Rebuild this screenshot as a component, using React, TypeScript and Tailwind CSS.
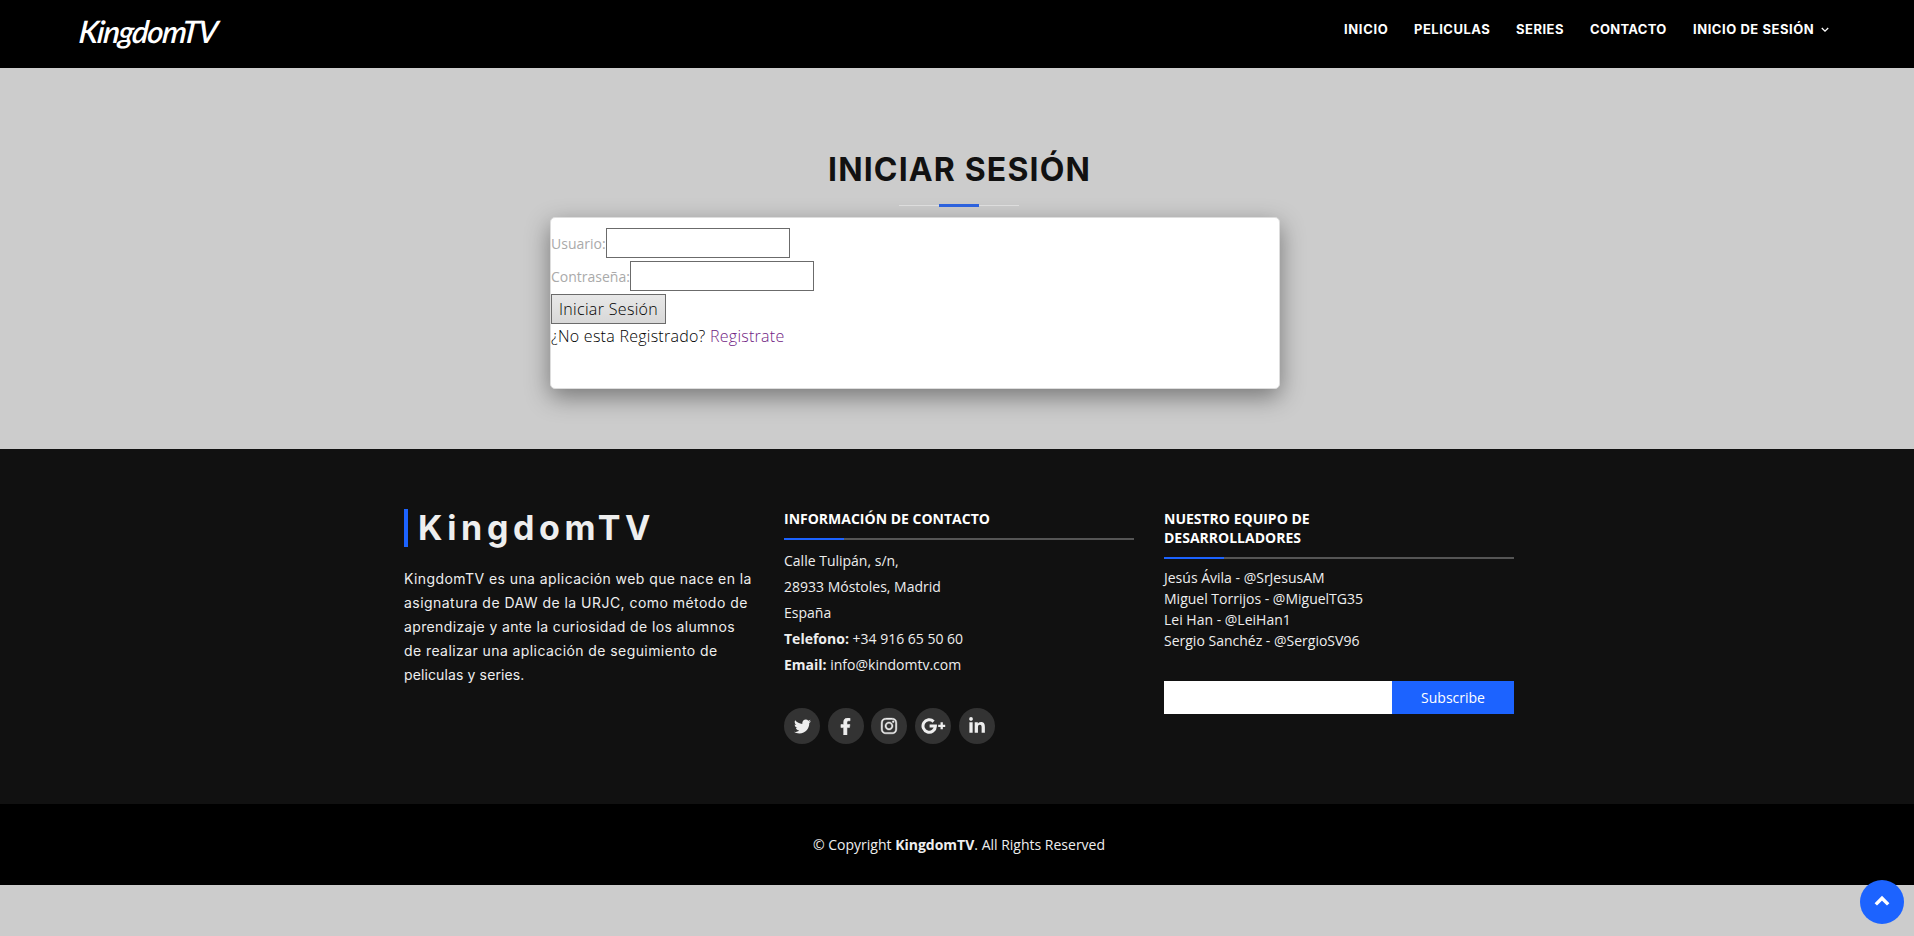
import React from "react";
import { FaTwitter, FaFacebookF, FaInstagram, FaLinkedinIn } from "react-icons/fa";

const nav = [
  { label: "INICIO", cls: "w-[70px] tracking-[0.65px]" },
  { label: "PELICULAS", cls: "w-[102px] tracking-[0.5px]" },
  { label: "SERIES", cls: "w-[74px] tracking-[0.5px]" },
  { label: "CONTACTO", cls: "w-[103px] tracking-[0.3px]" },
  { label: "INICIO DE SESIÓN", cls: "w-[128px] tracking-[0.55px]" },
];

const about = [
  { text: "KingdomTV es una aplicación web que nace en la", cls: "tracking-[0.42px]" },
  { text: "asignatura de DAW de la URJC, como método de", cls: "tracking-[0.46px]" },
  { text: "aprendizaje y ante la curiosidad de los alumnos", cls: "tracking-[0.37px]" },
  { text: "de realizar una aplicación de seguimiento de", cls: "tracking-[0.42px]" },
  { text: "peliculas y series.", cls: "tracking-[0.12px]" },
];

const team = [
  "Jesús Ávila - @SrJesusAM",
  "Miguel Torrijos - @MiguelTG35",
  "Lei Han - @LeiHan1",
  "Sergio Sanchéz - @SergioSV96",
];

function GooglePlus() {
  return (
    <svg viewBox="0 0 25 16" className="h-[16px] w-[25px]" fill="none" stroke="currentColor" strokeWidth="3">
      <path d="M12.6 3.6A6.2 6.2 0 1 0 14.4 8.1H8.6" />
      <path d="M17.2 7.8h7M20.7 4.3v7" strokeWidth="2.3" />
    </svg>
  );
}

const social = [
  <FaTwitter size={17} />,
  <FaFacebookF size={17} stroke="currentColor" strokeWidth={16} />,
  <FaInstagram size={18} stroke="currentColor" strokeWidth={12} />,
  <GooglePlus />,
  <FaLinkedinIn size={18} />,
];

function Heading({ children }: { children: React.ReactNode }) {
  return (
    <div>
      <h4 className="pb-[10px] text-[14px] leading-[19px] font-bold text-white">{children}</h4>
      <div className="flex h-[2px] bg-[#555]">
        <div className="w-[60px] bg-[#1c63ff]" />
      </div>
    </div>
  );
}

export default function App() {
  return (
    <div className="min-h-[936px] bg-[#ccc] font-['Open_Sans',sans-serif] text-[#111]">
      <header className="flex h-[68px] justify-between bg-black pl-[79px] text-white">
        <a className="origin-left -skew-x-6 pt-[9px] font-['Lato',sans-serif] text-[31px] leading-[44px] font-semibold italic tracking-[-1.3px]">
          KingdomTV
        </a>
        <nav className="flex pt-[19px] pr-[85px] font-['Inter',sans-serif] text-[13px] leading-[20px] font-bold whitespace-nowrap">
          {nav.map((n) => (
            <a key={n.label} className={n.cls}>{n.label}</a>
          ))}
          <svg viewBox="0 0 8 6" className="mt-[8px] h-[6px] w-[8px]" fill="none" stroke="currentColor" strokeWidth="1.3">
            <path d="M.8 1 4 4.2 7.2 1" />
          </svg>
        </nav>
      </header>

      <main className="h-[381px] pt-[79px] pl-[4px]">
        <h3 className="pl-px text-center font-['Inter',sans-serif] text-[32px] leading-[45px] font-bold tracking-[1.15px]">INICIAR SESIÓN</h3>
        <div className="mx-auto mt-[12px] flex h-[3px] w-[120px] items-center">
          <div className="h-px flex-1 bg-[#ddd]" />
          <div className="h-[3px] w-[40px] bg-[#2d62dd]" />
          <div className="h-px flex-1 bg-[#ddd]" />
        </div>
        <form className="mt-[10px] ml-[546px] h-[172px] w-[730px] rounded-[5px] border border-[#ddd] bg-white pt-[10px] shadow-[0_8px_24px_rgba(0,0,0,0.42)]">
          <div className="flex items-center">
            <label className="w-[55px] text-[14px] whitespace-nowrap text-[#aaa]">Usuario:</label>
            <input className="h-[30px] w-[184px] border border-[#6b6b6b] bg-white" />
          </div>
          <div className="mt-[3px] flex items-center">
            <label className="w-[79px] text-[14px] whitespace-nowrap text-[#aaa]">Contraseña:</label>
            <input className="h-[30px] w-[184px] border border-[#6b6b6b] bg-white" />
          </div>
          <button type="button" className="mt-[3px] block h-[30px] w-[115px] border border-[#6b6b6b] bg-linear-to-b from-[#e8e8e8] to-[#d8d8d8] text-[16px] leading-[28px] font-light tracking-[0.33px] whitespace-nowrap text-black">
            Iniciar Sesión
          </button>
          <p className="text-[16px] leading-[24px] font-light tracking-[0.26px] text-black">
            ¿No esta Registrado? <a className="text-[#702283]">Registrate</a>
          </p>
        </form>
      </main>

      <footer className="text-[14px] text-[#eee]">
        <div className="flex h-[355px] justify-center gap-[30px] bg-[#111] pt-[60px] pl-[4px]">
          <section className="w-[350px] font-['Inter',sans-serif]">
            <h3 className="h-[38px] border-l-4 border-[#1c63ff] pl-[10px] text-[34px] leading-[38px] font-bold tracking-[4.6px]">KingdomTV</h3>
            <div className="mt-[20px] text-[14px] leading-[24px] whitespace-nowrap">
              {about.map((line) => <p key={line.text} className={line.cls}>{line.text}</p>)}
            </div>
          </section>
          <section className="w-[350px]">
            <Heading>INFORMACIÓN DE CONTACTO</Heading>
            <p className="mt-[8px] leading-[26px]">
              Calle Tulipán, s/n,<br />28933 Móstoles, Madrid<br />España<br />
              <strong>Telefono:</strong> +34 916 65 50 60<br />
              <strong>Email:</strong> info@kindomtv.com
            </p>
            <div className="mt-[30px] flex gap-[7.7px]">
              {social.map((icon, i) => (
                <a key={i} className="flex size-[36px] items-center justify-center rounded-full bg-[#333]">{icon}</a>
              ))}
            </div>
          </section>
          <section className="w-[350px]">
            <Heading>NUESTRO EQUIPO DE<br />DESARROLLADORES</Heading>
            <p className="mt-[8px] leading-[21px]">
              {team.map((t) => <span key={t} className="block">{t}</span>)}
            </p>
            <div className="mt-[30px] flex h-[33px]">
              <input className="w-[228px] bg-white" />
              <button type="button" className="flex-1 bg-[#1c63ff] text-white">Subscribe</button>
            </div>
          </section>
        </div>
        <div className="h-[81px] bg-black pt-[30px] pl-[4px] text-center leading-[21px]">
          © Copyright <strong>KingdomTV</strong>. All Rights Reserved
        </div>
      </footer>

      <a className="fixed right-[10px] bottom-[12px] flex size-[44px] items-center justify-center rounded-full bg-[#1c63ff] text-white">
        <svg viewBox="0 0 16 12" className="mb-[2px] h-[12px] w-[16px]" fill="none" stroke="currentColor" strokeWidth="3.4">
          <path d="M1.8 9.4 8 3.2l6.2 6.2" />
        </svg>
      </a>
    </div>
  );
}
